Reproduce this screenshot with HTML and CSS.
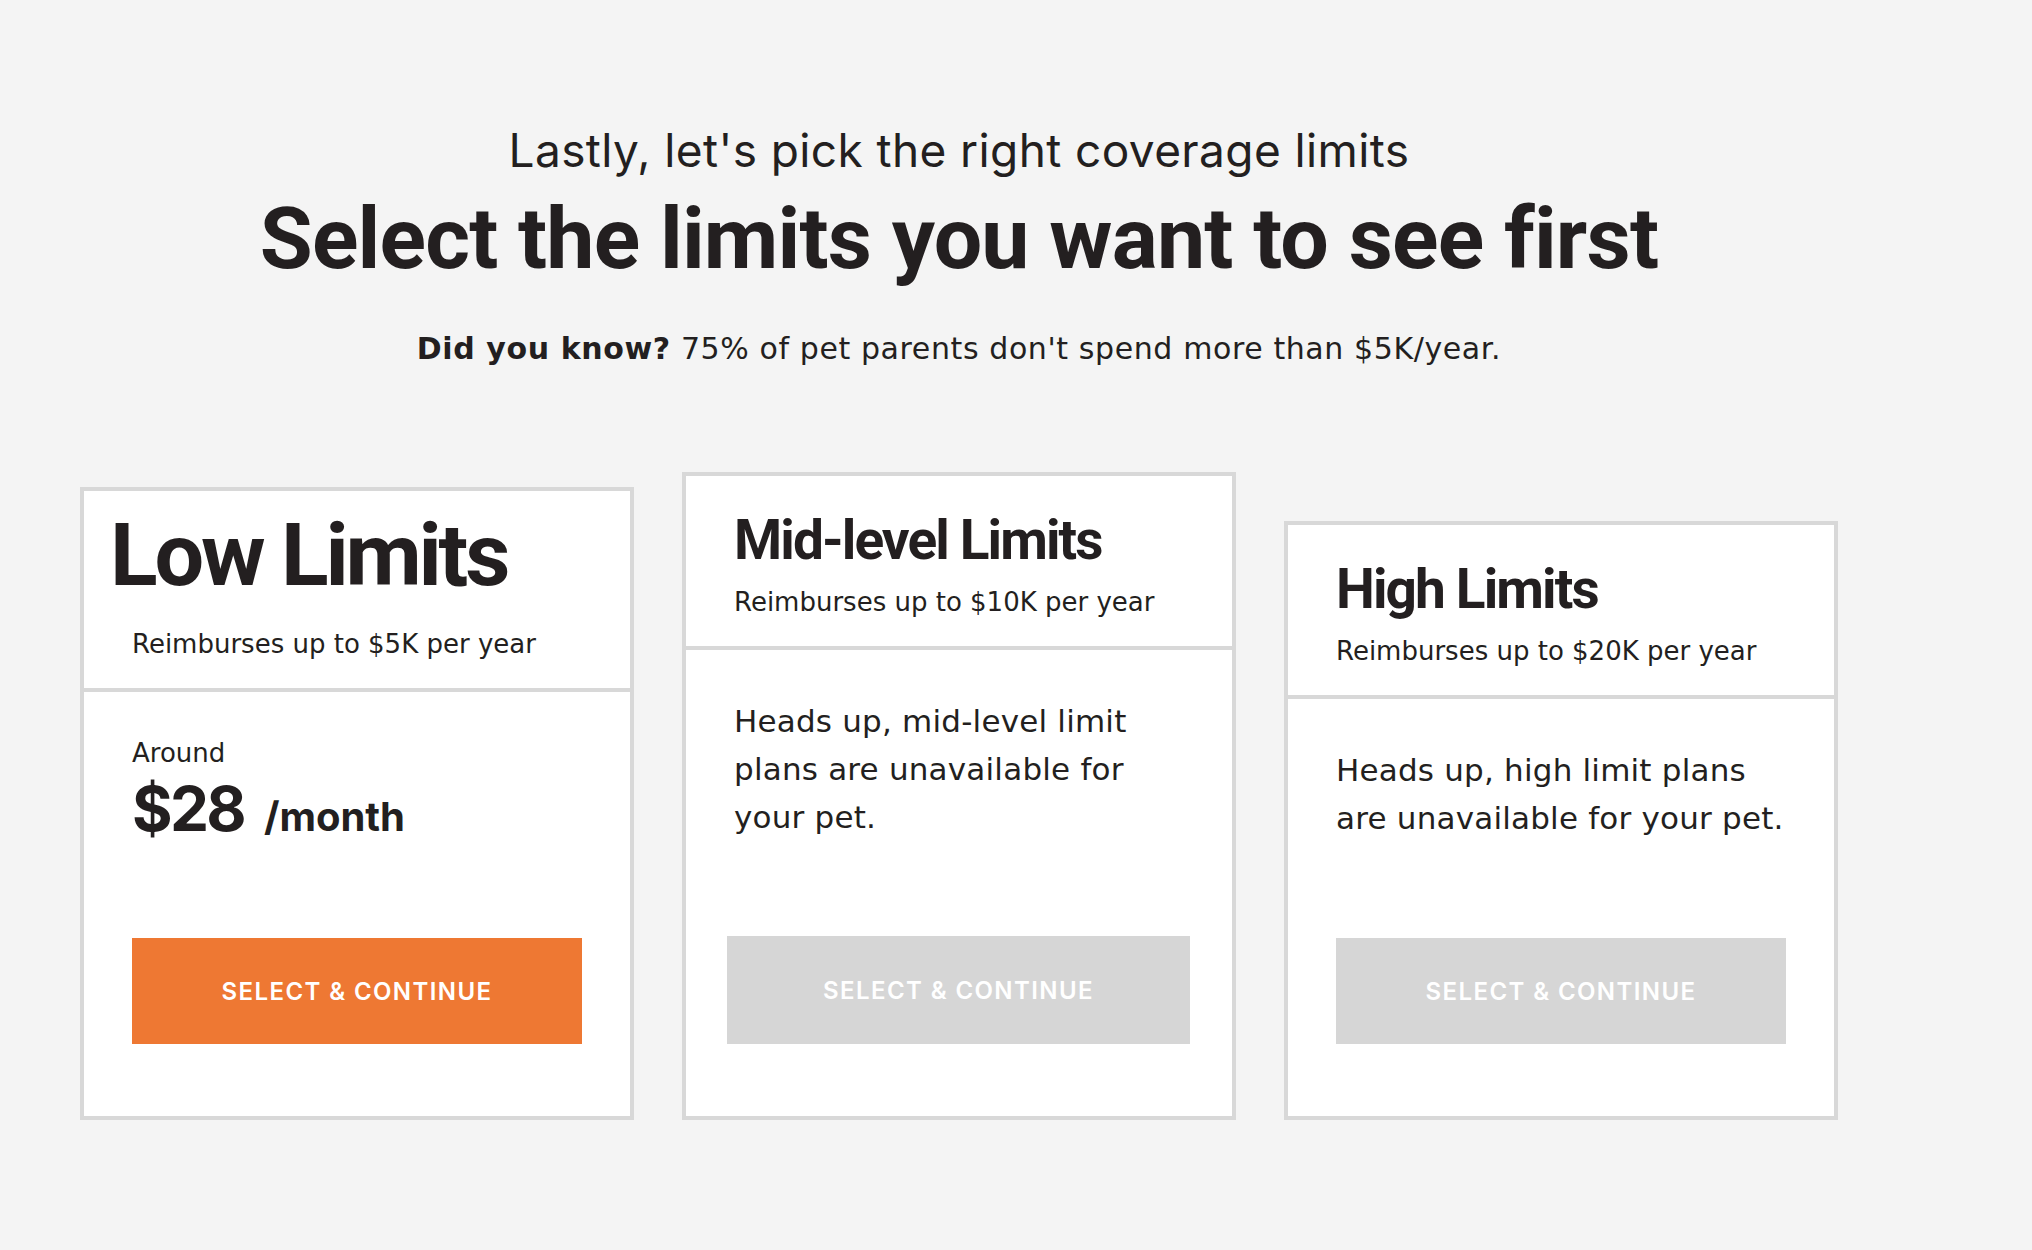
FILE: index.html
```html
<!DOCTYPE html>
<html lang="en">
<head>
<meta charset="utf-8">
<title>Select coverage limits</title>
<link rel="stylesheet" href="styles.css">
</head>
<body>
<div class="page">
  <header class="intro">
    <p class="kicker">Lastly, let's pick the right coverage limits</p>
    <h1 class="title">Select the limits you want to see first</h1>
    <p class="fact"><strong>Did you know?</strong> 75% of pet parents don't spend more than $5K/year.</p>
  </header>

  <div class="cards">
    <section class="card card-low">
      <div class="card-head">
        <h2 class="plan-name plan-name-lg">Low Limits</h2>
        <p class="plan-sub">Reimburses up to $5K per year</p>
      </div>
      <div class="card-body">
        <p class="around">Around</p>
        <p class="price"><span class="amount">$28</span><span class="per">/month</span></p>
        <button class="cta">Select &amp; Continue</button>
      </div>
    </section>

    <section class="card card-mid">
      <div class="card-head">
        <h2 class="plan-name">Mid-level Limits</h2>
        <p class="plan-sub">Reimburses up to $10K per year</p>
      </div>
      <div class="card-body">
        <p class="note">Heads up, mid-level limit<br>plans are unavailable for<br>your pet.</p>
        <button class="cta cta-disabled cta-wide" disabled>Select &amp; Continue</button>
      </div>
    </section>

    <section class="card card-high">
      <div class="card-head">
        <h2 class="plan-name">High Limits</h2>
        <p class="plan-sub">Reimburses up to $20K per year</p>
      </div>
      <div class="card-body">
        <p class="note">Heads up, high limit plans<br>are unavailable for your pet.</p>
        <button class="cta cta-disabled" disabled>Select &amp; Continue</button>
      </div>
    </section>
  </div>
</div>
</body>
</html>
```

FILE: styles.css
```css
* { box-sizing: border-box; }

body {
  margin: 0;
  background: #f4f4f4;
  color: #231f20;
  font-family: "DejaVu Sans", Inter, sans-serif;
}

.page {
  width: 1838px;
  padding-left: 80px;
}

.intro {
  text-align: center;
}

.kicker {
  margin: 122px 0 0;
  font-family: Inter, sans-serif;
  font-size: 46px;
  line-height: 56px;
  font-weight: 400;
  letter-spacing: 0.4px;
}

.title {
  margin: 11px 0 0;
  font-family: Roboto, Inter, sans-serif;
  font-size: 86px;
  line-height: 100px;
  font-weight: 700;
  letter-spacing: -0.8px;
}

.fact {
  margin: 42px 0 0;
  font-size: 30px;
  line-height: 36px;
  letter-spacing: 0.6px;
}

.fact strong { font-weight: 700; }

.cards {
  display: flex;
  align-items: flex-end;
  gap: 48px;
  margin-top: 105px;
}

.card {
  width: 554px;
  background: #fff;
  border: 4px solid #d8d8d8;
}

.card-head {
  padding: 32px 48px 28px;
  border-bottom: 4px solid #d8d8d8;
}

.plan-name {
  margin: 0;
  font-family: Roboto, Inter, sans-serif;
  font-size: 55px;
  line-height: 64px;
  font-weight: 700;
  letter-spacing: -1.9px;
}

.plan-sub {
  margin: 14px 0 0;
  font-size: 26px;
  line-height: 32px;
}

.card-low .card-head {
  padding-top: 14px;
  padding-bottom: 28px;
}

.plan-name-lg {
  font-size: 88px;
  line-height: 100px;
  letter-spacing: -3.2px;
  margin-left: -22px;
}

.plan-name-lg + .plan-sub {
  margin-top: 23px;
}

.card-body {
  padding: 47px 48px 72px;
}

.card-low .card-body {
  padding-top: 45px;
}

.around {
  margin: 0;
  font-size: 26px;
  line-height: 32px;
}

.price {
  margin: 5px 0 0;
  font-family: Inter, sans-serif;
  font-size: 62px;
  line-height: 70px;
  font-weight: 700;
}

.amount {
  letter-spacing: -2.7px;
}

.per {
  font-size: 40px;
  line-height: 40px;
  margin-left: 20px;
}

.note {
  margin: 0;
  font-size: 31px;
  line-height: 48px;
  letter-spacing: 0.2px;
}

.price + .cta { margin-top: 94px; }
.note + .cta { margin-top: 96px; }

.cta {
  display: block;
  width: 450px;
  height: 106px;
  border: 0;
  padding: 0;
  background: #ee7833;
  color: #fff;
  font-family: Inter, sans-serif;
  font-size: 24px;
  font-weight: 600;
  letter-spacing: 1.4px;
  text-transform: uppercase;
}

.cta-disabled { background: #d6d6d6; }

.note + .cta-wide {
  width: 463px;
  height: 108px;
  margin-left: -7px;
  margin-top: 95px;
}
```
